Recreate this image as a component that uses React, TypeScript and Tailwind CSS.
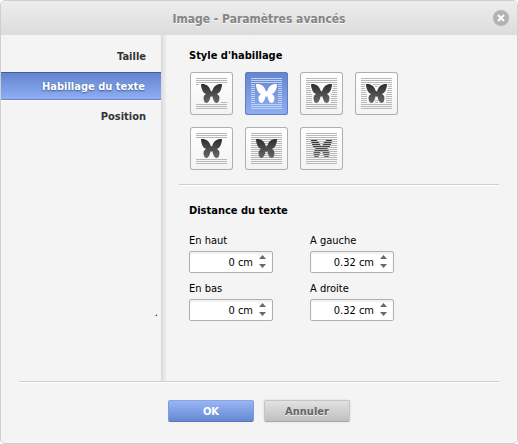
import { useState } from "react";

type Wrap = "inline" | "square" | "tight" | "through" | "topbottom" | "behind" | "front";

const BUTTERFLY =
  "M11 13 Q10.5 12 12 12 C16.500 12 19.500 14.500 20.800 19 L21.500 19.500 L22.200 19 C23.500 14.500 26.500 12 31 12 Q32.500 12 32 13 C31.500 17 30.200 21 26.800 22 C29.300 23 30 25.500 29.200 28 C28.700 30.200 28 31 26.500 31 C24.500 31 23.200 28 22.300 24 L21.500 25 L20.700 24 C19.800 28 18.500 31 16.500 31 C15 31 14.300 30.200 13.800 28 C13 25.500 13.700 23 16.200 22 C12.800 21 11.500 17 11 13 Z";

const ROWS = Array.from({ length: 16 }, (_, i) => 6 + i * 2);

// Text segments on either side of the picture, as [x, width] pairs
function segments(kind: Wrap, y: number): number[][] {
  const full = [[6, 31]];
  if (kind === "behind" || kind === "front") return full;
  if (kind === "inline") {
    if (y === 12) return [[6, 3]];
    if (y === 30) return [[31, 6]];
  }
  if (kind === "topbottom" || kind === "inline") return y <= 10 || y >= 32 ? full : [];
  if (y <= 10 || y >= 32) return full;
  if (kind === "square") return [[6, 4], [33, 4]];
  const left = y < 18 ? 4 : y < 22 ? 5 : 6;
  const sides = [[6, left], [37 - left, left]];
  if (kind === "through") {
    if (y === 12) sides.push([18, 7]);
    if (y === 14) sides.push([20, 3]);
    if (y === 28 || y === 30) sides.push([20, 3]);
  }
  return sides;
}

function WrapIcon({ kind, active }: { kind: Wrap; active: boolean }) {
  const lines = ROWS.flatMap((y) =>
    segments(kind, y).map(([x, w]) => (
      <rect key={`${x}-${y}`} x={x} y={y} width={w} height="1" fill={active ? "#c3d1f3" : "#b8b8b8"} />
    )),
  );
  return (
    <svg viewBox="0 0 43 43" className="size-full" aria-hidden="true">
      <defs>
        <linearGradient id={`wing-${kind}`} x1="0" y1="0" x2="0" y2="1">
          <stop offset="0" stopColor="#2e2e2e" />
          <stop offset="1" stopColor="#686868" />
        </linearGradient>
      </defs>
      {kind !== "front" && lines}
      <path d={BUTTERFLY} fill={active ? "#ffffff" : `url(#wing-${kind})`} />
      {kind === "front" && lines}
    </svg>
  );
}

const OPTIONS: { kind: Wrap; label: string }[] = [
  { kind: "inline", label: "Aligné sur le texte" },
  { kind: "square", label: "Carré" },
  { kind: "tight", label: "Rapproché" },
  { kind: "through", label: "Au travers" },
  { kind: "topbottom", label: "Haut et bas" },
  { kind: "behind", label: "Derrière le texte" },
  { kind: "front", label: "Devant le texte" },
];

function Spinner({ id, label, initial }: { id: string; label: string; initial: number }) {
  const [value, setValue] = useState(`${initial} cm`);
  const step = (d: number) =>
    setValue((v) => `${Math.max(0, Math.round(((parseFloat(v) || 0) + d) * 100) / 100)} cm`);
  return (
    <div>
      <label htmlFor={id} className="block h-4 leading-4">{label}</label>
      <div className="mt-0.5 flex h-[22px] w-[84px] rounded-xs border border-[#afafaf] bg-white shadow-[inset_0_2px_2px_#f0f0f0]">
        <input
          id={id}
          value={value}
          onChange={(e) => setValue(e.target.value)}
          className="min-w-0 flex-1 bg-transparent pt-0.5 pr-[3px] text-right outline-none"
        />
        <div className="flex w-4 flex-col items-center justify-center gap-[5px] pr-[3px] pb-0.5">
          <button type="button" aria-label="Augmenter" onClick={() => step(0.01)}>
            <svg width="7" height="4" className="block"><path d="M0 4L3.500 0L7 4Z" fill="#686868" /></svg>
          </button>
          <button type="button" aria-label="Diminuer" onClick={() => step(-0.01)}>
            <svg width="7" height="4" className="block"><path d="M0 0L3.500 4L7 0Z" fill="#686868" /></svg>
          </button>
        </div>
      </div>
    </div>
  );
}

export default function App() {
  const [wrap, setWrap] = useState<Wrap>("square");
  const tabs = ["Taille", "Habillage du texte", "Position"];
  const [tab, setTab] = useState(1);
  return (
    <div
      role="dialog"
      aria-labelledby="title"
      className="flex min-h-screen flex-col overflow-hidden rounded-[5px] border border-[#cfcfcf] bg-[#f4f4f4] font-['DejaVu_Sans_Condensed','DejaVu_Sans',sans-serif] text-[11px] text-black"
    >
      <header className="grid h-[34px] grid-cols-[1fr_auto_1fr] items-center bg-linear-to-b from-[#ededed] to-[#dcdcdc] px-2">
        <h1 id="title" className="col-start-2 pt-0.5 text-[12px] font-bold text-[#848484] [text-shadow:0_1px_0_#f8f8f8]">
          Image - Paramètres avancés
        </h1>
        <button type="button" aria-label="Fermer" className="size-4 justify-self-end rounded-full bg-[#b3b3b3]">
          <svg viewBox="0 0 16 16" className="size-4"><path d="M5 5L11 11M11 5L5 11" stroke="#fff" strokeWidth="2" /></svg>
        </button>
      </header>

      <div className="flex flex-1">
        <nav className="flex w-40 flex-col pt-[7px]">
          {tabs.map((name, i) => (
            <button
              key={name}
              type="button"
              onClick={() => setTab(i)}
              className={
                i === tab
                  ? "my-0.5 h-7 border-t border-b border-t-[#435d99] border-b-[#6a83c0] bg-linear-to-b from-[#6485cd] to-[#8eaff5] pt-0.5 pr-4 text-right font-bold text-white shadow-[0_1px_0_#fff] [text-shadow:0_1px_2px_#3c5590]"
                  : "h-7 pt-0.5 pr-[15px] text-right font-bold text-[#333]"
              }
            >
              {name}
            </button>
          ))}
          <span className="mt-auto pr-[3px] pb-[60px] text-right leading-4">.</span>
        </nav>
        <div className="w-[6px] bg-linear-to-r from-[#d9d9d9] to-[#f4f4f4]" />
        <main className="flex-1 pr-[18px] pl-3">
          <section className="pt-[13px] pb-3.5 pl-[10px]">
            <h2 className="leading-4 font-bold">Style d'habillage</h2>
            <div className="mt-2 grid grid-cols-[repeat(4,43px)] gap-3 pl-px">
              {OPTIONS.map(({ kind, label }) => (
                <button
                  key={kind}
                  type="button"
                  aria-label={label}
                  aria-pressed={wrap === kind}
                  onClick={() => setWrap(kind)}
                  className={
                    wrap === kind
                      ? "size-[43px] rounded-[3px] bg-linear-to-b from-[#6485cd] to-[#8eaff5] inset-ring inset-ring-[#5f7dbf]"
                      : "size-[43px] rounded-[3px] bg-linear-to-b from-white to-[#f3f3f3] inset-ring inset-ring-[#afafaf]"
                  }
                >
                  <WrapIcon kind={kind} active={wrap === kind} />
                </button>
              ))}
            </div>
          </section>
          <hr className="border-[#d0d0d0] shadow-[0_1px_0_#fff]" />
          <section className="pt-[18px] pl-[10px]">
            <h2 className="leading-4 font-bold">Distance du texte</h2>
            <div className="mt-3.5 grid grid-cols-[84px_84px] gap-x-[37px] gap-y-2">
              <Spinner id="top" label="En haut" initial={0} />
              <Spinner id="left" label="A gauche" initial={0.32} />
              <Spinner id="bottom" label="En bas" initial={0} />
              <Spinner id="right" label="A droite" initial={0.32} />
            </div>
          </section>
        </main>
      </div>

      <footer className="mx-[18px] flex h-[62px] justify-center gap-[10px] border-t border-[#d0d0d0] pt-[18px] shadow-[inset_0_1px_0_#fff]">
        <button type="button" className="h-[22px] w-[86px] rounded-xs border border-x-[#7f9ada] border-t-[#8aa5e4] border-b-[#5875b4] bg-linear-to-b from-[#98b5f4] to-[#6789d2] pt-0.5 font-bold text-white">
          OK
        </button>
        <button type="button" className="h-[22px] w-[86px] rounded-xs border border-[#c4c4c4] border-b-[#a8a8a8] bg-linear-to-b from-[#e2e2e2] to-[#c0c0c0] pt-0.5 font-bold text-[#666] shadow-[0_0_2px_#ccc] [text-shadow:0_1px_0_#eee]">
          Annuler
        </button>
      </footer>
    </div>
  );
}
